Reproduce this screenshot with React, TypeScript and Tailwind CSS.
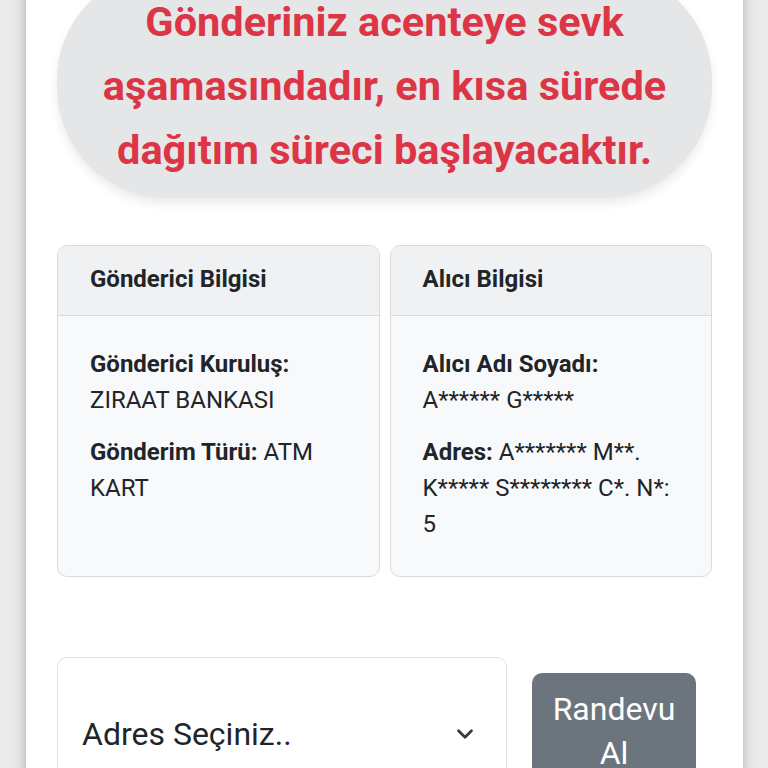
import { ChevronDown } from 'lucide-react'

function InfoCard({ title, children }: { title: string; children: React.ReactNode }) {
  return (
    <div className="rounded-[10px] border border-[#d9dadc] bg-[#f8f9fa] overflow-hidden">
      <div className="h-[70px] flex items-center px-[32px] pb-[4px] bg-[#f0f1f3] border-b border-[#d9dadc]">
        <h3 className="text-[24px] font-bold text-[#212529]">{title}</h3>
      </div>
      <div className="px-[32px] pt-[30px] pb-[18px] text-[24px] leading-[36px] text-[#212529]">
        {children}
      </div>
    </div>
  )
}

export default function App() {
  return (
    <div className="min-h-screen bg-[#ebebeb] overflow-hidden" style={{ fontFamily: 'Roboto, "Noto Sans", sans-serif' }}>
      <div className="mx-[25px] min-h-screen bg-white px-[31px] shadow-[0_0_12px_rgba(0,0,0,0.25)] border-l border-[#c8c8c8]">
        <div className="-mt-[30px] rounded-[110px] bg-[#e5e6e8] pt-[20px] pb-[16px] px-4 shadow-[0_6px_10px_rgba(0,0,0,0.08)]">
          <p className="text-center text-[41.5px] leading-[64px] font-bold text-[#dc3545]">
            Gönderiniz acenteye sevk aşamasındadır, en kısa sürede dağıtım süreci başlayacaktır.
          </p>
        </div>

        <div className="mt-[47px] grid grid-cols-2 gap-[10px]">
          <InfoCard title="Gönderici Bilgisi">
            <p className="mb-[16px]">
              <span className="font-bold">Gönderici Kuruluş:</span> ZIRAAT BANKASI
            </p>
            <p className="mb-[16px]">
              <span className="font-bold">Gönderim Türü:</span> ATM KART
            </p>
          </InfoCard>
          <InfoCard title="Alıcı Bilgisi">
            <p className="mb-[16px]">
              <span className="font-bold">Alıcı Adı Soyadı:</span> A****** G*****
            </p>
            <p className="mb-[16px]">
              <span className="font-bold">Adres:</span> A******* M**. K***** S******** C*. N*: 5
            </p>
          </InfoCard>
        </div>

        <div className="mt-[80px] flex items-start gap-[25px]">
          <div className="w-[450px] h-[154px] rounded-[10px] border border-[#dee2e6] bg-white flex items-center justify-between pl-[24px] pr-[28px]">
            <span className="text-[32px] text-[#212529]">Adres Seçiniz..</span>
            <ChevronDown className="w-[26px] h-[26px] text-[#343a40]" strokeWidth={2.5} />
          </div>
          <button className="mt-[16px] w-[164px] rounded-[10px] bg-[#6c757d] px-[18px] pt-[14px] pb-[14px] text-[32px] leading-[44px] text-white text-center">
            Randevu Al
          </button>
        </div>
      </div>
    </div>
  )
}
